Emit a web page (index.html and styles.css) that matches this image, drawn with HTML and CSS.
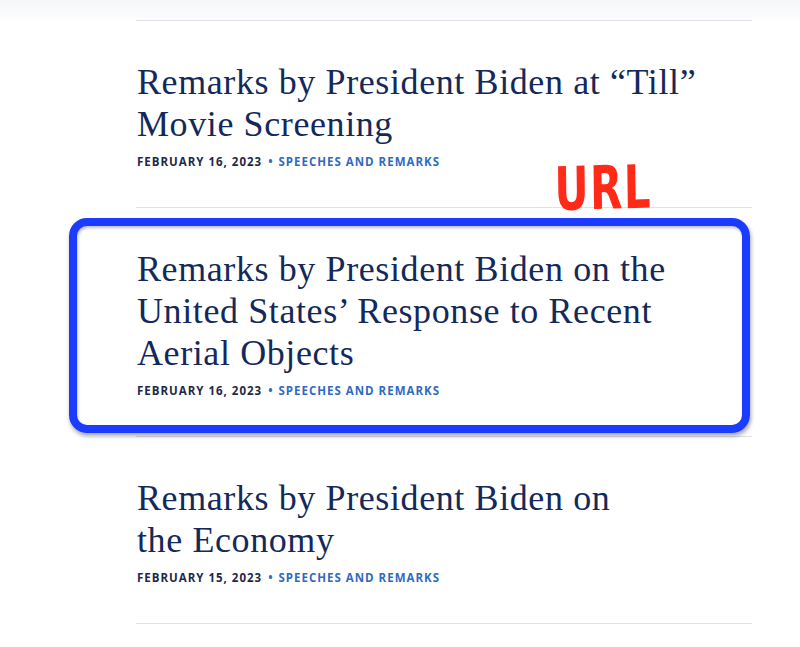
FILE: index.html
```html
<!DOCTYPE html>
<html lang="en">
<head>
<meta charset="utf-8">
<title>Speeches and Remarks</title>
<link rel="stylesheet" href="styles.css">
</head>
<body>
<div class="topbar"></div>
<main class="list">
  <article class="item">
    <h2 class="title">Remarks by President Biden at “Till” Movie Screening</h2>
    <div class="meta"><span class="date">February 16, 2023</span><span class="dot">•</span><span class="cat">Speeches and Remarks</span></div>
  </article>
  <article class="item">
    <h2 class="title">Remarks by President Biden on the United States’ Response to Recent Aerial Objects</h2>
    <div class="meta"><span class="date">February 16, 2023</span><span class="dot">•</span><span class="cat">Speeches and Remarks</span></div>
  </article>
  <article class="item">
    <h2 class="title narrow">Remarks by President Biden on the Economy</h2>
    <div class="meta"><span class="date">February 15, 2023</span><span class="dot">•</span><span class="cat">Speeches and Remarks</span></div>
  </article>
</main>
<div class="annot-box"></div>
<div class="annot-label">URL</div>
</body>
</html>
```

FILE: styles.css
```css
html, body {
  margin: 0;
  padding: 0;
  background: #ffffff;
}
body {
  position: relative;
  width: 800px;
  height: 647px;
  overflow: hidden;
}
.topbar {
  height: 20px;
  background: linear-gradient(#f6f7f9, #fdfdfe);
}
.list {
  margin-left: 136px;
  width: 616px;
  border-top: 1px solid #dfdfee;
}
.item {
  padding: 40px 0 37px 1px;
  border-bottom: 1px solid #dfdfee;
}
.title {
  margin: 0;
  font-family: "Liberation Serif", serif;
  font-weight: normal;
  font-size: 36px;
  line-height: 42px;
  letter-spacing: 0.6px;
  color: #14295a;
  max-width: 568px;
}
.title.narrow {
  max-width: 500px;
}
.meta {
  margin-top: 9px;
  font-family: "Open Sans", sans-serif;
  font-weight: 700;
  font-size: 11.5px;
  line-height: 16px;
  text-transform: uppercase;
  letter-spacing: 1px;
  display: flex;
  gap: 6px;
}
.date { color: #1d2945; }
.dot { color: #2f6bbf; letter-spacing: 0; }
.cat { color: #2f6bbf; }
.annot-box {
  position: absolute;
  left: 69px;
  top: 218px;
  width: 665px;
  height: 199px;
  border: 8px solid #1b3cff;
  border-radius: 18px;
  box-shadow: 1px 3px 4px rgba(0,0,0,0.35), inset 1px 2px 3px rgba(0,0,0,0.25);
}
.annot-label {
  position: absolute;
  left: 554px;
  top: 155px;
  font-family: "DejaVu Sans", sans-serif;
  font-weight: bold;
  font-size: 60px;
  line-height: 68px;
  color: #ff2a17;
  transform: scaleX(0.7) rotate(-1deg);
  transform-origin: left top;
  letter-spacing: 2px;
}
```
